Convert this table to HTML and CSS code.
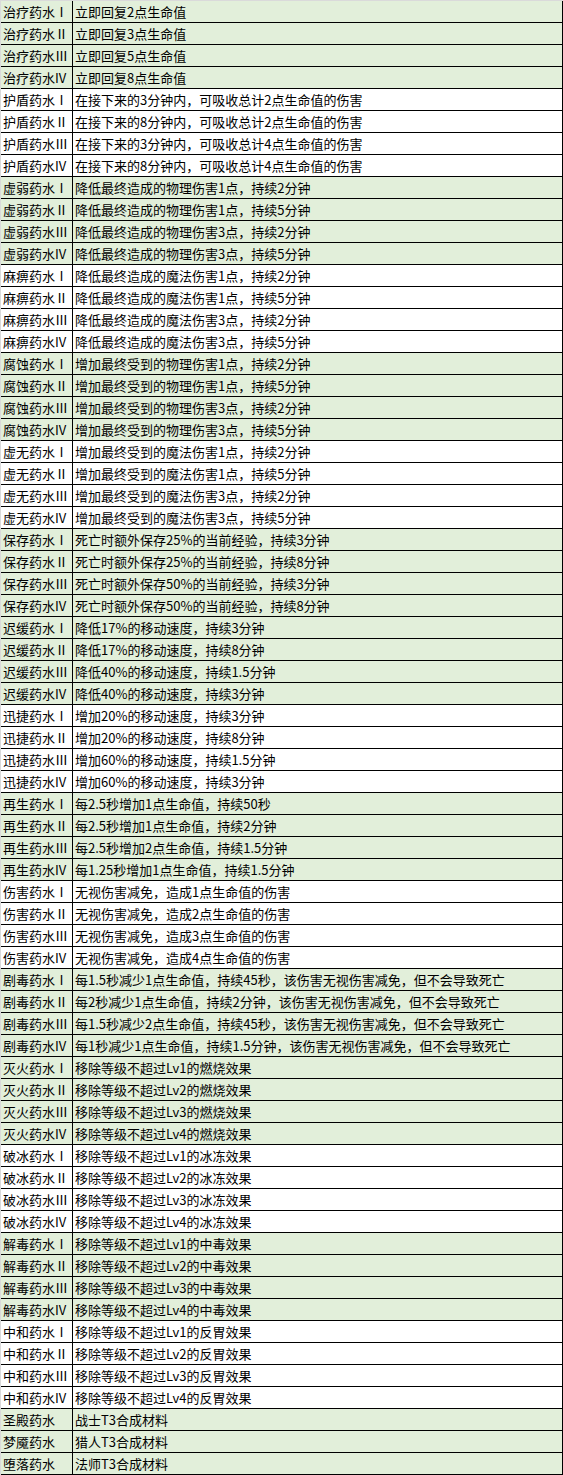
FILE: index.html
```html
<!DOCTYPE html>
<html lang="zh">
<head>
<meta charset="utf-8">
<title>药水效果</title>
<link rel="stylesheet" href="styles.css">
</head>
<body>
<div class="sheet">
  <div class="row g"><div class="name">治疗药水Ⅰ</div><div class="desc">立即回复2点生命值</div></div>
  <div class="row g"><div class="name">治疗药水Ⅱ</div><div class="desc">立即回复3点生命值</div></div>
  <div class="row g"><div class="name">治疗药水Ⅲ</div><div class="desc">立即回复5点生命值</div></div>
  <div class="row g"><div class="name">治疗药水IV</div><div class="desc">立即回复8点生命值</div></div>
  <div class="row"><div class="name">护盾药水Ⅰ</div><div class="desc">在接下来的3分钟内，可吸收总计2点生命值的伤害</div></div>
  <div class="row"><div class="name">护盾药水Ⅱ</div><div class="desc">在接下来的8分钟内，可吸收总计2点生命值的伤害</div></div>
  <div class="row"><div class="name">护盾药水Ⅲ</div><div class="desc">在接下来的3分钟内，可吸收总计4点生命值的伤害</div></div>
  <div class="row"><div class="name">护盾药水IV</div><div class="desc">在接下来的8分钟内，可吸收总计4点生命值的伤害</div></div>
  <div class="row g"><div class="name">虚弱药水Ⅰ</div><div class="desc">降低最终造成的物理伤害1点，持续2分钟</div></div>
  <div class="row g"><div class="name">虚弱药水Ⅱ</div><div class="desc">降低最终造成的物理伤害1点，持续5分钟</div></div>
  <div class="row g"><div class="name">虚弱药水Ⅲ</div><div class="desc">降低最终造成的物理伤害3点，持续2分钟</div></div>
  <div class="row g"><div class="name">虚弱药水IV</div><div class="desc">降低最终造成的物理伤害3点，持续5分钟</div></div>
  <div class="row"><div class="name">麻痹药水Ⅰ</div><div class="desc">降低最终造成的魔法伤害1点，持续2分钟</div></div>
  <div class="row"><div class="name">麻痹药水Ⅱ</div><div class="desc">降低最终造成的魔法伤害1点，持续5分钟</div></div>
  <div class="row"><div class="name">麻痹药水Ⅲ</div><div class="desc">降低最终造成的魔法伤害3点，持续2分钟</div></div>
  <div class="row"><div class="name">麻痹药水IV</div><div class="desc">降低最终造成的魔法伤害3点，持续5分钟</div></div>
  <div class="row g"><div class="name">腐蚀药水Ⅰ</div><div class="desc">增加最终受到的物理伤害1点，持续2分钟</div></div>
  <div class="row g"><div class="name">腐蚀药水Ⅱ</div><div class="desc">增加最终受到的物理伤害1点，持续5分钟</div></div>
  <div class="row g"><div class="name">腐蚀药水Ⅲ</div><div class="desc">增加最终受到的物理伤害3点，持续2分钟</div></div>
  <div class="row g"><div class="name">腐蚀药水IV</div><div class="desc">增加最终受到的物理伤害3点，持续5分钟</div></div>
  <div class="row"><div class="name">虚无药水Ⅰ</div><div class="desc">增加最终受到的魔法伤害1点，持续2分钟</div></div>
  <div class="row"><div class="name">虚无药水Ⅱ</div><div class="desc">增加最终受到的魔法伤害1点，持续5分钟</div></div>
  <div class="row"><div class="name">虚无药水Ⅲ</div><div class="desc">增加最终受到的魔法伤害3点，持续2分钟</div></div>
  <div class="row"><div class="name">虚无药水IV</div><div class="desc">增加最终受到的魔法伤害3点，持续5分钟</div></div>
  <div class="row g"><div class="name">保存药水Ⅰ</div><div class="desc">死亡时额外保存25%的当前经验，持续3分钟</div></div>
  <div class="row g"><div class="name">保存药水Ⅱ</div><div class="desc">死亡时额外保存25%的当前经验，持续8分钟</div></div>
  <div class="row g"><div class="name">保存药水Ⅲ</div><div class="desc">死亡时额外保存50%的当前经验，持续3分钟</div></div>
  <div class="row g"><div class="name">保存药水IV</div><div class="desc">死亡时额外保存50%的当前经验，持续8分钟</div></div>
  <div class="row g"><div class="name">迟缓药水Ⅰ</div><div class="desc">降低17%的移动速度，持续3分钟</div></div>
  <div class="row g"><div class="name">迟缓药水Ⅱ</div><div class="desc">降低17%的移动速度，持续8分钟</div></div>
  <div class="row g"><div class="name">迟缓药水Ⅲ</div><div class="desc">降低40%的移动速度，持续1.5分钟</div></div>
  <div class="row g"><div class="name">迟缓药水IV</div><div class="desc">降低40%的移动速度，持续3分钟</div></div>
  <div class="row"><div class="name">迅捷药水Ⅰ</div><div class="desc">增加20%的移动速度，持续3分钟</div></div>
  <div class="row"><div class="name">迅捷药水Ⅱ</div><div class="desc">增加20%的移动速度，持续8分钟</div></div>
  <div class="row"><div class="name">迅捷药水Ⅲ</div><div class="desc">增加60%的移动速度，持续1.5分钟</div></div>
  <div class="row"><div class="name">迅捷药水IV</div><div class="desc">增加60%的移动速度，持续3分钟</div></div>
  <div class="row g"><div class="name">再生药水Ⅰ</div><div class="desc">每2.5秒增加1点生命值，持续50秒</div></div>
  <div class="row g"><div class="name">再生药水Ⅱ</div><div class="desc">每2.5秒增加1点生命值，持续2分钟</div></div>
  <div class="row g"><div class="name">再生药水Ⅲ</div><div class="desc">每2.5秒增加2点生命值，持续1.5分钟</div></div>
  <div class="row g"><div class="name">再生药水IV</div><div class="desc">每1.25秒增加1点生命值，持续1.5分钟</div></div>
  <div class="row"><div class="name">伤害药水Ⅰ</div><div class="desc">无视伤害减免，造成1点生命值的伤害</div></div>
  <div class="row"><div class="name">伤害药水Ⅱ</div><div class="desc">无视伤害减免，造成2点生命值的伤害</div></div>
  <div class="row"><div class="name">伤害药水Ⅲ</div><div class="desc">无视伤害减免，造成3点生命值的伤害</div></div>
  <div class="row"><div class="name">伤害药水IV</div><div class="desc">无视伤害减免，造成4点生命值的伤害</div></div>
  <div class="row g"><div class="name">剧毒药水Ⅰ</div><div class="desc">每1.5秒减少1点生命值，持续45秒，该伤害无视伤害减免，但不会导致死亡</div></div>
  <div class="row g"><div class="name">剧毒药水Ⅱ</div><div class="desc">每2秒减少1点生命值，持续2分钟，该伤害无视伤害减免，但不会导致死亡</div></div>
  <div class="row g"><div class="name">剧毒药水Ⅲ</div><div class="desc">每1.5秒减少2点生命值，持续45秒，该伤害无视伤害减免，但不会导致死亡</div></div>
  <div class="row g"><div class="name">剧毒药水IV</div><div class="desc">每1秒减少1点生命值，持续1.5分钟，该伤害无视伤害减免，但不会导致死亡</div></div>
  <div class="row g"><div class="name">灭火药水Ⅰ</div><div class="desc">移除等级不超过Lv1的燃烧效果</div></div>
  <div class="row g"><div class="name">灭火药水Ⅱ</div><div class="desc">移除等级不超过Lv2的燃烧效果</div></div>
  <div class="row g"><div class="name">灭火药水Ⅲ</div><div class="desc">移除等级不超过Lv3的燃烧效果</div></div>
  <div class="row g"><div class="name">灭火药水IV</div><div class="desc">移除等级不超过Lv4的燃烧效果</div></div>
  <div class="row"><div class="name">破冰药水Ⅰ</div><div class="desc">移除等级不超过Lv1的冰冻效果</div></div>
  <div class="row"><div class="name">破冰药水Ⅱ</div><div class="desc">移除等级不超过Lv2的冰冻效果</div></div>
  <div class="row"><div class="name">破冰药水Ⅲ</div><div class="desc">移除等级不超过Lv3的冰冻效果</div></div>
  <div class="row"><div class="name">破冰药水IV</div><div class="desc">移除等级不超过Lv4的冰冻效果</div></div>
  <div class="row g"><div class="name">解毒药水Ⅰ</div><div class="desc">移除等级不超过Lv1的中毒效果</div></div>
  <div class="row g"><div class="name">解毒药水Ⅱ</div><div class="desc">移除等级不超过Lv2的中毒效果</div></div>
  <div class="row g"><div class="name">解毒药水Ⅲ</div><div class="desc">移除等级不超过Lv3的中毒效果</div></div>
  <div class="row g"><div class="name">解毒药水IV</div><div class="desc">移除等级不超过Lv4的中毒效果</div></div>
  <div class="row"><div class="name">中和药水Ⅰ</div><div class="desc">移除等级不超过Lv1的反胃效果</div></div>
  <div class="row"><div class="name">中和药水Ⅱ</div><div class="desc">移除等级不超过Lv2的反胃效果</div></div>
  <div class="row"><div class="name">中和药水Ⅲ</div><div class="desc">移除等级不超过Lv3的反胃效果</div></div>
  <div class="row"><div class="name">中和药水IV</div><div class="desc">移除等级不超过Lv4的反胃效果</div></div>
  <div class="row g"><div class="name">圣殿药水</div><div class="desc">战士T3合成材料</div></div>
  <div class="row g"><div class="name">梦魇药水</div><div class="desc">猎人T3合成材料</div></div>
  <div class="row g"><div class="name">堕落药水</div><div class="desc">法师T3合成材料</div></div>
</div>
</body>
</html>
```

FILE: styles.css
```css
html, body {
  margin: 0;
  padding: 0;
  background: #ffffff;
}

.sheet {
  width: 563px;
  box-sizing: border-box;
  border-top: 1px solid #dadada;
  border-left: 1px solid #dadada;
  font-family: "Noto Sans CJK SC", "Microsoft YaHei", sans-serif;
  font-size: 13px;
  color: #000;
}

.row {
  display: grid;
  grid-template-columns: 72px 490px;
  height: 22px;
  box-sizing: border-box;
  border-bottom: 1px solid #000;
  background: #ffffff;
}

.row.g {
  background: #e2efda;
}

.name,
.desc {
  box-sizing: border-box;
  border-right: 1px solid #000;
  line-height: 21px;
  white-space: nowrap;
  overflow: hidden;
}

.name {
  padding-left: 2px;
}

.desc {
  padding-left: 2px;
}
```
